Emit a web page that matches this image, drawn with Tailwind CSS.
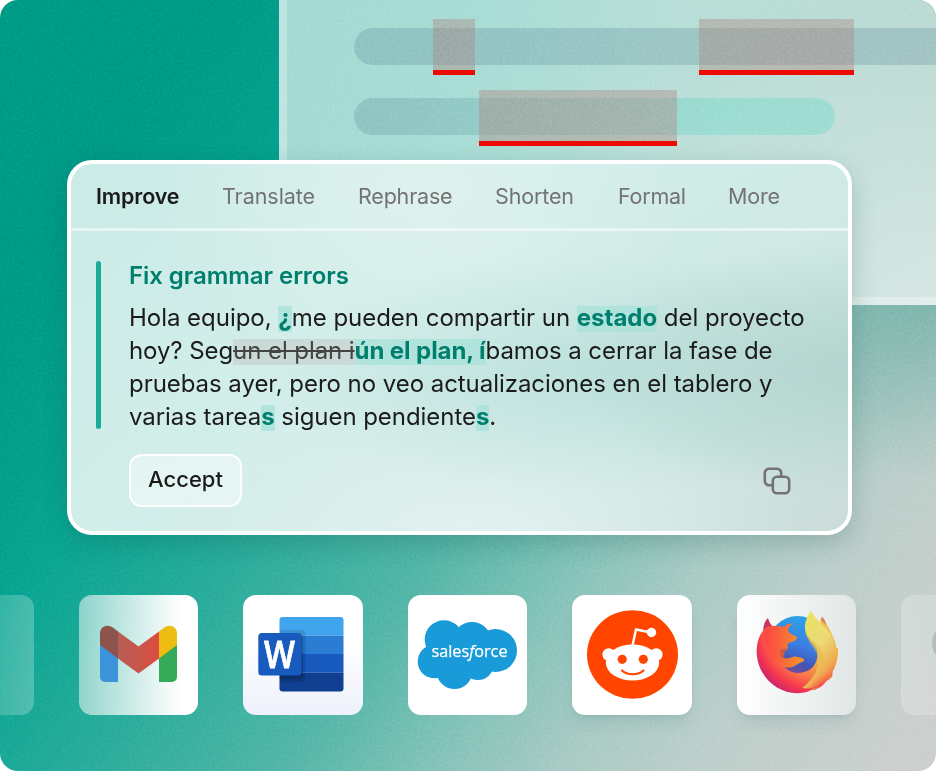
<!DOCTYPE html>
<html lang="en">
<head>
  <meta charset="UTF-8">
  <meta name="viewport" content="width=device-width, initial-scale=1.0">
  <title>Writing assistant</title>
  <script src="https://cdn.jsdelivr.net/npm/@tailwindcss/browser@4"></script>
  <style>
    body { font-family: Inter, "Liberation Sans", sans-serif; }

    /* Backdrop */
    .stage {
      background:
        radial-gradient(ellipse 240px 190px at 916px 290px, rgba(90, 165, 155, 0.6), transparent),
        linear-gradient(125deg, #009b87 0, #009b87 180px, #04a18d 300px, #08a592 350px, #29ac9b 507px, #52b6a7 670px, #84c3b9 793px, #a9cbc5 900px, #bccfcb 1000px, #cbd0ce 1162px);
    }

    /* Document behind the card */
    .doc {
      background:
        radial-gradient(ellipse 420px 290px at 100% 100%, #d6e7e4, rgba(214, 231, 228, 0)),
        linear-gradient(105deg, #a3dad2 0%, #a9ddd6 30%, #b8dfd8 55%, #bcdad2 100%);
      background-origin: border-box;
    }

    .glass {
      background:
        radial-gradient(ellipse 300px 130px at 800px 205px, rgba(170, 207, 200, 0.75), transparent),
        radial-gradient(ellipse 330px 120px at 530px 210px, rgba(181, 222, 217, 0.7), transparent),
        radial-gradient(ellipse 330px 170px at 400px 380px, rgba(229, 243, 241, 0.9), transparent),
        radial-gradient(ellipse 260px 200px at 350px 20px, rgba(224, 242, 239, 0.9), transparent),
        linear-gradient(140deg, #cbebe6 0%, #d2eeea 40%, #cfe8e4 72%, #cbdcd9 100%);
      box-shadow: 0 8px 24px rgba(20, 70, 65, 0.22);
    }

    /* Highlights inside the suggestion */
    .added { color: #007f6e; background: linear-gradient(#a9e2dacc, #a9e2dacc) 0 3px / 100% 26px no-repeat; }
    .removed { color: #444; background: linear-gradient(#c9dad7, #c9dad7) 0 3px / 100% 26px no-repeat; }
  </style>
</head>
<body class="bg-white">
  <main class="stage relative h-[771px] w-[936px] overflow-hidden rounded-[18px]">

    <!-- Document with underlined mistakes -->
    <section class="doc absolute left-[279px] top-0 h-[305px] w-[657px] border-b-8 border-l-8 border-white/30">
      <div class="absolute left-[67px] top-[28px] h-[37px] w-[600px] rounded-l-full bg-[#5b8a97]/28"></div>
      <div class="absolute left-[67px] top-[98px] h-[37px] w-[481px] rounded-full bg-linear-to-r from-[#5b8a97]/28 from-10% to-[#6bd9c8]/40 to-75%"></div>
      <div class="absolute left-[146px] top-[19px] h-[56px] w-[42px] border-b-[5px] border-[#ee0a00] bg-[#b0857f]/40"></div>
      <div class="absolute left-[412px] top-[19px] h-[56px] w-[155px] border-b-[5px] border-[#ee0a00] bg-[#b0857f]/40"></div>
      <div class="absolute left-[192px] top-[90px] h-[56px] w-[198px] border-b-[5px] border-[#ee0a00] bg-[#b0857f]/40"></div>
    </section>

    <!-- Grain -->
    <svg class="absolute inset-0 h-full w-full opacity-10 mix-blend-overlay">
      <filter id="grain" x="0" y="0" width="100%" height="100%" color-interpolation-filters="sRGB"><feTurbulence type="fractalNoise" baseFrequency="0.4" numOctaves="2"/><feColorMatrix values="1 0 0 0 0  1 0 0 0 0  1 0 0 0 0  0 0 0 0 1"/></filter>
      <rect width="936" height="771" filter="url(#grain)"/>
    </svg>

    <!-- Suggestion card -->
    <section class="glass absolute left-[67px] top-[160px] h-[375px] w-[785px] rounded-[25px] border-4 border-white bg-origin-border">
      <nav class="flex h-[67px] items-center gap-[43px] border-b-[3px] border-white/50 pl-[25px] text-[21.5px] tracking-[-0.15px] text-[#737373]">
        <span class="w-[83px] font-semibold text-[#1b1b1b]">Improve</span>
        <span class="w-[93px] tracking-[-0.05px]">Translate</span>
        <span class="w-[94px] tracking-[-0.2px]">Rephrase</span>
        <span class="w-[80px]">Shorten</span>
        <span class="w-[67px] tracking-[-0.25px]">Formal</span>
        <span>More</span>
      </nav>
      <div class="flex pl-[25px] pt-[30px]">
        <div class="h-[168px] w-[5px] rounded-full bg-[#1bab98]"></div>
        <div class="ml-7 h-[168px]">
          <h2 class="h-[40px] pt-px text-[24px] font-semibold leading-[28px] tracking-[-0.06px] text-[#007f6e]">Fix grammar errors</h2>
          <div class="whitespace-nowrap text-[24px] leading-[33px] tracking-[-0.05px] text-[#1b1b1b]">
            <p class="tracking-[-0.03px]">Hola equipo, <b class="added">¿</b>me pueden compartir un <b class="added">estado</b> del proyecto</p>
            <p class="tracking-[-0.08px]">hoy? Seg<s class="removed">un el plan i</s><b class="added">ún el plan, í</b>bamos a cerrar la fase de</p>
            <p>pruebas ayer, pero no veo actualizaciones en el tablero y</p>
            <p>varias tarea<b class="added">s</b> siguen pendiente<b class="added">s</b>.</p>
          </div>
        </div>
      </div>
      <div class="mt-[25px] flex items-center justify-between pl-[58px] pr-[57px]">
        <button class="h-[53px] w-[113px] rounded-[13px] border-2 border-white bg-white/40 pb-[3px] text-[22px] font-medium text-[#1b1b1b]">Accept</button>
        <svg class="h-7 w-7" viewBox="0 0 28 28" fill="none" stroke="#737373" stroke-width="2.6">
          <rect x="9.8" y="9.8" width="16.4" height="16.4" rx="4.2"/>
          <path d="M9.8 18.2H6A4.2 4.2 0 0 1 1.8 14V6A4.2 4.2 0 0 1 6 1.8h8A4.2 4.2 0 0 1 18.2 6v3.8"/>
        </svg>
      </div>
    </section>

    <!-- App icons -->
    <section class="absolute -left-[86px] top-[595px] flex gap-[45px]">
      <div class="h-[119.5px] w-[119.5px] rounded-[13px] bg-linear-to-r from-white/0 to-white/25"></div>

      <div class="h-[119.5px] w-[119.5px] rounded-[13px] bg-linear-to-r from-white/50 to-white to-85%">
        <svg viewBox="0 0 119.5 119.5">
          <defs>
            <linearGradient id="gm" x1="21" x2="80" gradientUnits="userSpaceOnUse"><stop stop-color="#a5665c"/><stop offset="1" stop-color="#dc4c3f"/></linearGradient>
          </defs>
          <path d="M21 45l18 13v29H26a5 5 0 0 1-5-5z" fill="#3b93d9"/>
          <path d="M80 58l18-13v37a5 5 0 0 1-5 5H80z" fill="#35aa58"/>
          <path d="M21 50v-11.500c0-7 7.500-10 13.500-5.500L39 36.500v27z" fill="#8d544d"/>
          <path d="M98 50v-11.500c0-7-7.500-10-13.500-5.500L80 36.500v27z" fill="#edbd14"/>
          <path d="M39 36.500L59.500 51.500 80 36.500v27L59.500 78.500 39 63.500z" fill="url(#gm)"/>
        </svg>
      </div>

      <div class="h-[119.5px] w-[119.5px] rounded-[13px] bg-linear-to-b from-white from-40% to-[#eef1fc]">
        <svg viewBox="0 0 119.5 119.5">
          <clipPath id="sheet"><rect x="36.500" y="22" width="64" height="74.500" rx="3"/></clipPath>
          <g clip-path="url(#sheet)">
            <path d="M36 22h65v18.500H36z" fill="#41a5ee"/>
            <path d="M36 40.500h65V59H36z" fill="#2b7cd3"/>
            <path d="M36 59h65v18.700H36z" fill="#185abd"/>
            <path d="M36 77.700h65V97H36z" fill="#103f91"/>
            <rect x="20" y="35" width="42.500" height="52" rx="4" fill="#000" opacity=".12"/>
            <rect x="20" y="38" width="40" height="46" rx="4" fill="#000" opacity=".18"/>
          </g>
          <rect x="15.300" y="38" width="43" height="42.500" rx="3.500" fill="#185abd"/>
          <text x="36.400" y="72.500" text-anchor="middle" font-family="Open Sans, sans-serif" font-weight="600" font-size="37" textLength="31" lengthAdjust="spacingAndGlyphs" fill="#fff" stroke="#fff" stroke-width=".8">W</text>
        </svg>
      </div>

      <div class="h-[119.5px] w-[119.5px] rounded-[13px] bg-white">
        <svg viewBox="0 0 119.5 119.5">
          <g fill="#189bd8">
            <circle cx="36" cy="44.500" r="19.300"/>
            <circle cx="64" cy="46.500" r="19.500"/>
            <circle cx="87.500" cy="55.500" r="21.500"/>
            <circle cx="26.500" cy="66.500" r="16.800"/>
            <circle cx="46.500" cy="76" r="18"/>
            <circle cx="70" cy="69.500" r="15.500"/>
            <path d="M30 38h58v36l-18 6-40 2z"/>
          </g>
          <text x="23.500" y="61.700" font-family="Open Sans, sans-serif" font-weight="500" font-size="16" textLength="76" lengthAdjust="spacingAndGlyphs" fill="#fff" stroke="#fff" stroke-width=".25">sales<tspan font-style="italic">f</tspan>orce</text>
        </svg>
      </div>

      <div class="h-[119.5px] w-[119.5px] rounded-[13px] bg-white shadow-lg shadow-teal-900/10">
        <svg viewBox="0 0 119.5 119.5">
          <ellipse cx="60.500" cy="59.500" rx="45.500" ry="44.300" fill="#ff4500"/>
          <g fill="#fff">
            <ellipse cx="60.500" cy="67.500" rx="26.700" ry="18"/>
            <circle cx="36.700" cy="59.500" r="6.300"/>
            <circle cx="84.300" cy="59.500" r="6.300"/>
            <circle cx="79.500" cy="37.500" r="4.700"/>
          </g>
          <path d="M60.500 50.500L64 34.500l15 3" fill="none" stroke="#fff" stroke-width="2.400" stroke-linejoin="round"/>
          <circle cx="50.200" cy="64.300" r="4.600" fill="#ff4500"/>
          <circle cx="71.300" cy="64.300" r="4.600" fill="#ff4500"/>
          <path d="M50 75.500c5 5 16.500 5 21.500 0" fill="none" stroke="#ff4500" stroke-width="2.200" stroke-linecap="round"/>
        </svg>
      </div>

      <div class="h-[119.5px] w-[119.5px] rounded-[13px] bg-linear-to-r from-white to-[#e0e6e5] shadow-lg shadow-teal-900/10">
        <svg viewBox="0 0 119.5 119.5">
          <defs>
            <linearGradient id="globe" x1=".7" y1="0" x2=".4" y2="1"><stop stop-color="#2aa6e8"/><stop offset=".5" stop-color="#3b7fe4"/><stop offset=".8" stop-color="#4455b5"/><stop offset="1" stop-color="#7a4a91"/></linearGradient>
            <radialGradient id="body" cx="80" cy="36" r="76" gradientUnits="userSpaceOnUse"><stop stop-color="#efc456"/><stop offset=".4" stop-color="#f0b04a"/><stop offset=".6" stop-color="#f8794a"/><stop offset=".78" stop-color="#f8394b"/><stop offset="1" stop-color="#b01686"/></radialGradient>
            <linearGradient id="flame" x1="0" y1="0" x2=".5" y2="1"><stop stop-color="#ece35c"/><stop offset=".55" stop-color="#eadb78"/><stop offset=".85" stop-color="#eeb152"/><stop offset="1" stop-color="#f0a04c" stop-opacity="0"/></linearGradient>
            <linearGradient id="head" x1="0" y1="0" x2="1" y2="0"><stop stop-color="#fb4647"/><stop offset=".35" stop-color="#f95f3c"/><stop offset="1" stop-color="#f4992c"/></linearGradient>
          </defs>
          <path d="M31 23c-4 4-5 9-4.500 14l12-4c-4-2-6-5-7.500-10z" fill="#cf3556"/>
          <circle cx="60.500" cy="50" r="29" fill="url(#globe)"/>
          <path d="M84 22c6 6 9 13 13 22 2 4 2 7 2 9 1.500-.5 2 0 2 2 .5 4-1 9-1.500 12-1 3-2 7-4 10 1 4-2 7-6 9-4 6-9 8-15 9-24 11-54-8-54.800-38C19.500 46 24 36 29 33c5-3 9-1 12 1l-1 20c0 12 9 24 21 24 12 0 20-8 19.500-20z" fill="url(#body)"/>
          <path d="M28 34c8-5 15-3 19-2 3-3 5-3.500 9-3.500-3 2-5 4-5 7 2 4 5 4 9 6.500 0 4-5 5-9 6-1 3 0 4 0 6-4-1-8 0-8 3 0 6 7 8 12 5 3-1.500 7 0 11 1.500 2 1 1 3-1 3.500-4 1-7 5-12 5.500-5 .5-9-1-12-3C30 61 25 43 28 34z" fill="url(#head)"/>
          <path d="M51 54c-5-1-8 1-8 4 0 2 2 4 5 4-2-4 0-6 3-8z" fill="#d65b35"/>
          <path d="M74 15c3 10 20 18 24 34 3 15-2 29-17 42-5 2-10 3-16 2 12-9 19-22 16-35-2-10-13-13-13-26 0-8 4-12 6-17z" fill="url(#flame)"/>
          <path d="M68 34c2 9 10 12 15 19 4 6 4 13 0 22 0-6-1-12-4-18-3-6-10-12-11-23z" fill="#efb744" opacity=".6"/>
          <path d="M85 22c2 1 4 5 4 8l-5-5zM95 77l-5 8 5-3zM82 92l-9 2 5 1z" fill="#dd8148"/>
        </svg>
      </div>

      <div class="relative h-[119.5px] w-[119.5px] overflow-hidden rounded-[13px] bg-linear-to-r from-white/25 to-white/0">
        <div class="absolute left-[31px] top-[27px] h-[42px] w-[42px] rounded-full bg-[#b3bdbb]"></div>
      </div>
    </section>
  </main>
</body>
</html>
